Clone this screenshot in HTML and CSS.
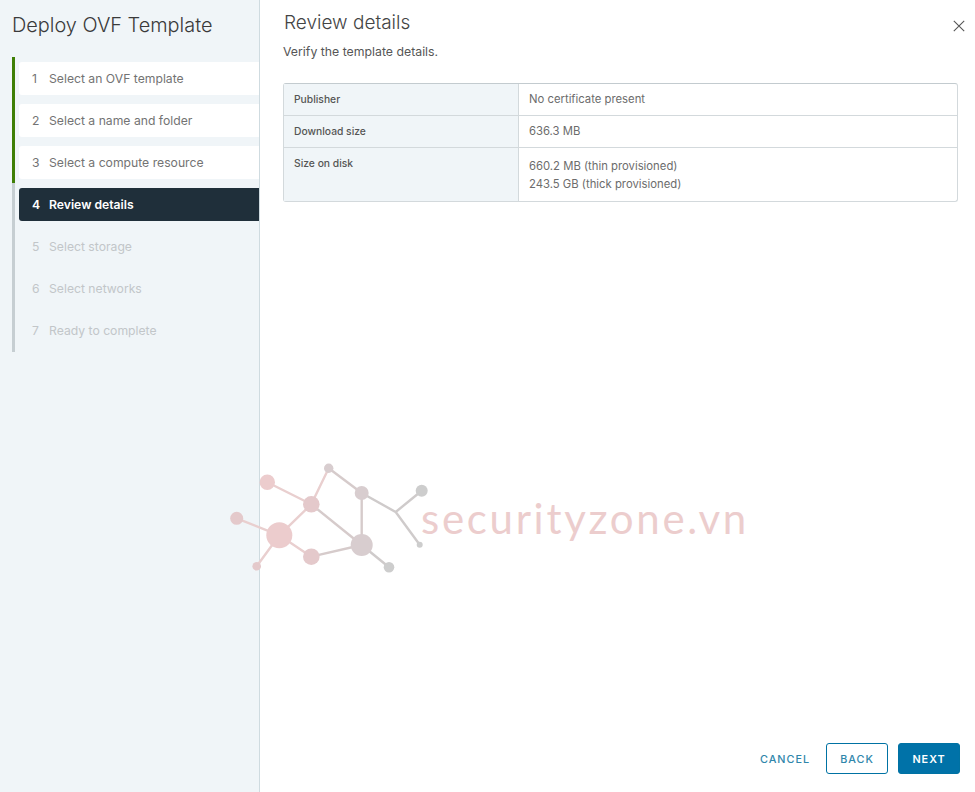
FILE: index.html
```html
<!DOCTYPE html>
<html lang="en">
<head>
<meta charset="utf-8">
<title>Deploy OVF Template</title>
<link rel="stylesheet" href="styles.css">
</head>
<body>
<div class="dialog">
  <aside class="sidebar">
    <h1 class="wizard-title">Deploy OVF Template</h1>
    <ol class="steps">
      <li class="step done"><span class="num">1</span><span>Select an OVF template</span></li>
      <li class="step done"><span class="num">2</span><span>Select a name and folder</span></li>
      <li class="step done"><span class="num">3</span><span>Select a compute resource</span></li>
      <li class="step active"><span class="num">4</span><span>Review details</span></li>
      <li class="step todo"><span class="num">5</span><span>Select storage</span></li>
      <li class="step todo"><span class="num">6</span><span>Select networks</span></li>
      <li class="step todo"><span class="num">7</span><span>Ready to complete</span></li>
    </ol>
  </aside>
  <main class="content">
    <header class="content-head">
      <h2 class="page-title">Review details</h2>
      <svg class="close" width="12" height="12" viewBox="0 0 12 12" aria-label="Close"><path d="M.8.8l10.4 10.4M11.2.8L.8 11.2" fill="none" stroke="#565656" stroke-width="1.1"/></svg>
    </header>
    <p class="subtitle">Verify the template details.</p>
    <div class="details">
      <div class="row"><div class="key">Publisher</div><div class="val">No certificate present</div></div>
      <div class="row"><div class="key">Download size</div><div class="val">636.3 MB</div></div>
      <div class="row"><div class="key">Size on disk</div><div class="val val-multi"><div>660.2 MB (thin provisioned)</div><div>243.5 GB (thick provisioned)</div></div></div>
    </div>
    <footer class="actions">
      <button class="btn btn-link">CANCEL</button>
      <button class="btn btn-outline">BACK</button>
      <button class="btn btn-primary">NEXT</button>
    </footer>
  </main>
</div>
<div class="watermark">
  <svg class="wm-logo" width="210" height="120" viewBox="220 460 210 120">
    <g stroke="#e9cfcf" stroke-width="2.4" fill="none">
      <path d="M267.3 482.3L311.3 504.3M236.7 518.3L279.3 535.3L256.7 566.3M279.3 535.3L311.3 504.3M279.3 535.3L311.3 556.7M311.3 504.3L328.7 468.3"/>
    </g>
    <g stroke="#d6cbcb" stroke-width="2.4" fill="none">
      <path d="M311.3 504.3L361.7 545M311.3 556.7L361.7 545M328.7 468.3L361.7 493M361.7 493V545"/>
    </g>
    <g stroke="#cfcbcb" stroke-width="2.4" fill="none">
      <path d="M361.7 493L395.7 512L421.7 490.7M395.7 512L419.7 544.7M361.7 545L389 567.3"/>
    </g>
    <g fill="#eccccd">
      <circle cx="267.3" cy="482.3" r="7.7"/>
      <circle cx="279.3" cy="535.3" r="13"/>
    </g>
    <g fill="#e4c9cb">
      <circle cx="236.7" cy="518.3" r="6.5"/>
      <circle cx="256.7" cy="566.3" r="4.3"/>
      <circle cx="311.3" cy="504.3" r="8.3"/>
      <circle cx="311.3" cy="556.7" r="8.3"/>
    </g>
    <g fill="#d8cdcf">
      <circle cx="328.7" cy="468.3" r="4.7"/>
      <circle cx="361.7" cy="493" r="7"/>
      <circle cx="361.7" cy="545" r="11"/>
    </g>
    <g fill="#cdcdcd">
      <circle cx="389" cy="567.3" r="5.3"/>
      <circle cx="421.7" cy="490.7" r="6"/>
      <circle cx="419.7" cy="544.7" r="3"/>
    </g>
  </svg>
  <span class="wm-text">securityzone.vn</span>
</div>
</body>
</html>
```

FILE: styles.css
```css
* { box-sizing: border-box; }
html, body { margin: 0; height: 100%; }
body {
  position: relative;
  width: 975px;
  height: 792px;
  overflow: hidden;
  background: #fff;
  font-family: "Inter", "Lato", "Liberation Sans", sans-serif;
  color: #666;
}
.dialog { display: flex; height: 792px; }

.sidebar {
  width: 260px;
  flex: none;
  background: #f0f5f8;
  border-right: 1px solid #cfdbe0;
  padding-top: 14px;
}
.wizard-title {
  margin: 0 0 20px 12px;
  font-size: 19.9px;
  line-height: 23px;
  font-weight: 300;
  color: #3a3a3a;
}
.steps {
  list-style: none;
  margin: 0 0 0 12px;
  padding: 5px 0 5px;
  width: 247px;
  display: flex;
  flex-direction: column;
  gap: 9px;
  border-left: 3px solid;
  border-image: linear-gradient(#3f7f06 0 126px, #c6ced2 126px) 1;
}
.step {
  height: 33px;
  margin-left: 4px;
  padding-left: 13px;
  display: flex;
  align-items: center;
  font-size: 12.2px;
  font-weight: 400;
  border-radius: 3px 0 0 3px;
}
.num { width: 17px; flex: none; }
.done { background: #fff; color: #737373; }
.active { background: #1f2f3a; color: #fff; font-weight: 600; }
.todo { color: #c2c6c9; }

.content { flex: 1; position: relative; padding: 0 17px 0 23px; display: flex; flex-direction: column; }
.content-head { display: flex; justify-content: space-between; align-items: flex-start; padding-top: 12px; }
.page-title { margin: 0 0 0 1px; font-size: 19px; line-height: 22px; font-weight: 300; color: #444; }
.close { margin-top: 8px; margin-right: -7px; }
.subtitle { margin: 10px 0 23px; font-size: 12.3px; line-height: 16px; color: #565656; }

.details { border: 1px solid #d3d9dc; border-top-color: #c3cbcf; border-radius: 3px; width: 675px; }
.row { display: flex; border-bottom: 1px solid #d3d9dc; }
.row:last-child { border-bottom: 0; }
.key {
  width: 235px;
  flex: none;
  background: #f0f5f8;
  border-right: 1px solid #d3d9dc;
  padding: 9px 10px;
  font-size: 10.3px;
  line-height: 12px;
  font-weight: 500;
  color: #555;
}
.val { padding: 8px 10px; font-size: 11.3px; line-height: 15px; color: #6c6c6c; height: 31px; }
.val-multi { height: 53px; padding-top: 10px; line-height: 17.5px; }

.actions { margin-top: auto; padding: 0 0 18px; display: flex; justify-content: flex-end; gap: 10px; margin-right: -2px; }
.btn {
  height: 31px;
  padding: 1px 0 0;
  font-family: inherit;
  font-size: 10.8px;
  font-weight: 500;
  letter-spacing: 1px;
  border-radius: 3px;
  border: 1px solid #0072a3;
}
.btn-link { border: 0; background: none; color: #2f86ab; width: 62px; }
.btn-outline { background: #fff; color: #2f86ab; width: 62px; }
.btn-primary { background: #0072a8; color: #fff; width: 62px; font-weight: 600; }

.watermark { position: absolute; left: 220px; top: 460px; display: flex; pointer-events: none; }
.wm-logo { display: block; flex: none; }
.wm-text {
  margin-left: -9px;
  margin-top: 30px;
  font-family: "Lato", sans-serif;
  font-size: 42px;
  line-height: 56px;
  letter-spacing: 2.7px;
  color: #eccdcd;
  white-space: nowrap;
}
```
